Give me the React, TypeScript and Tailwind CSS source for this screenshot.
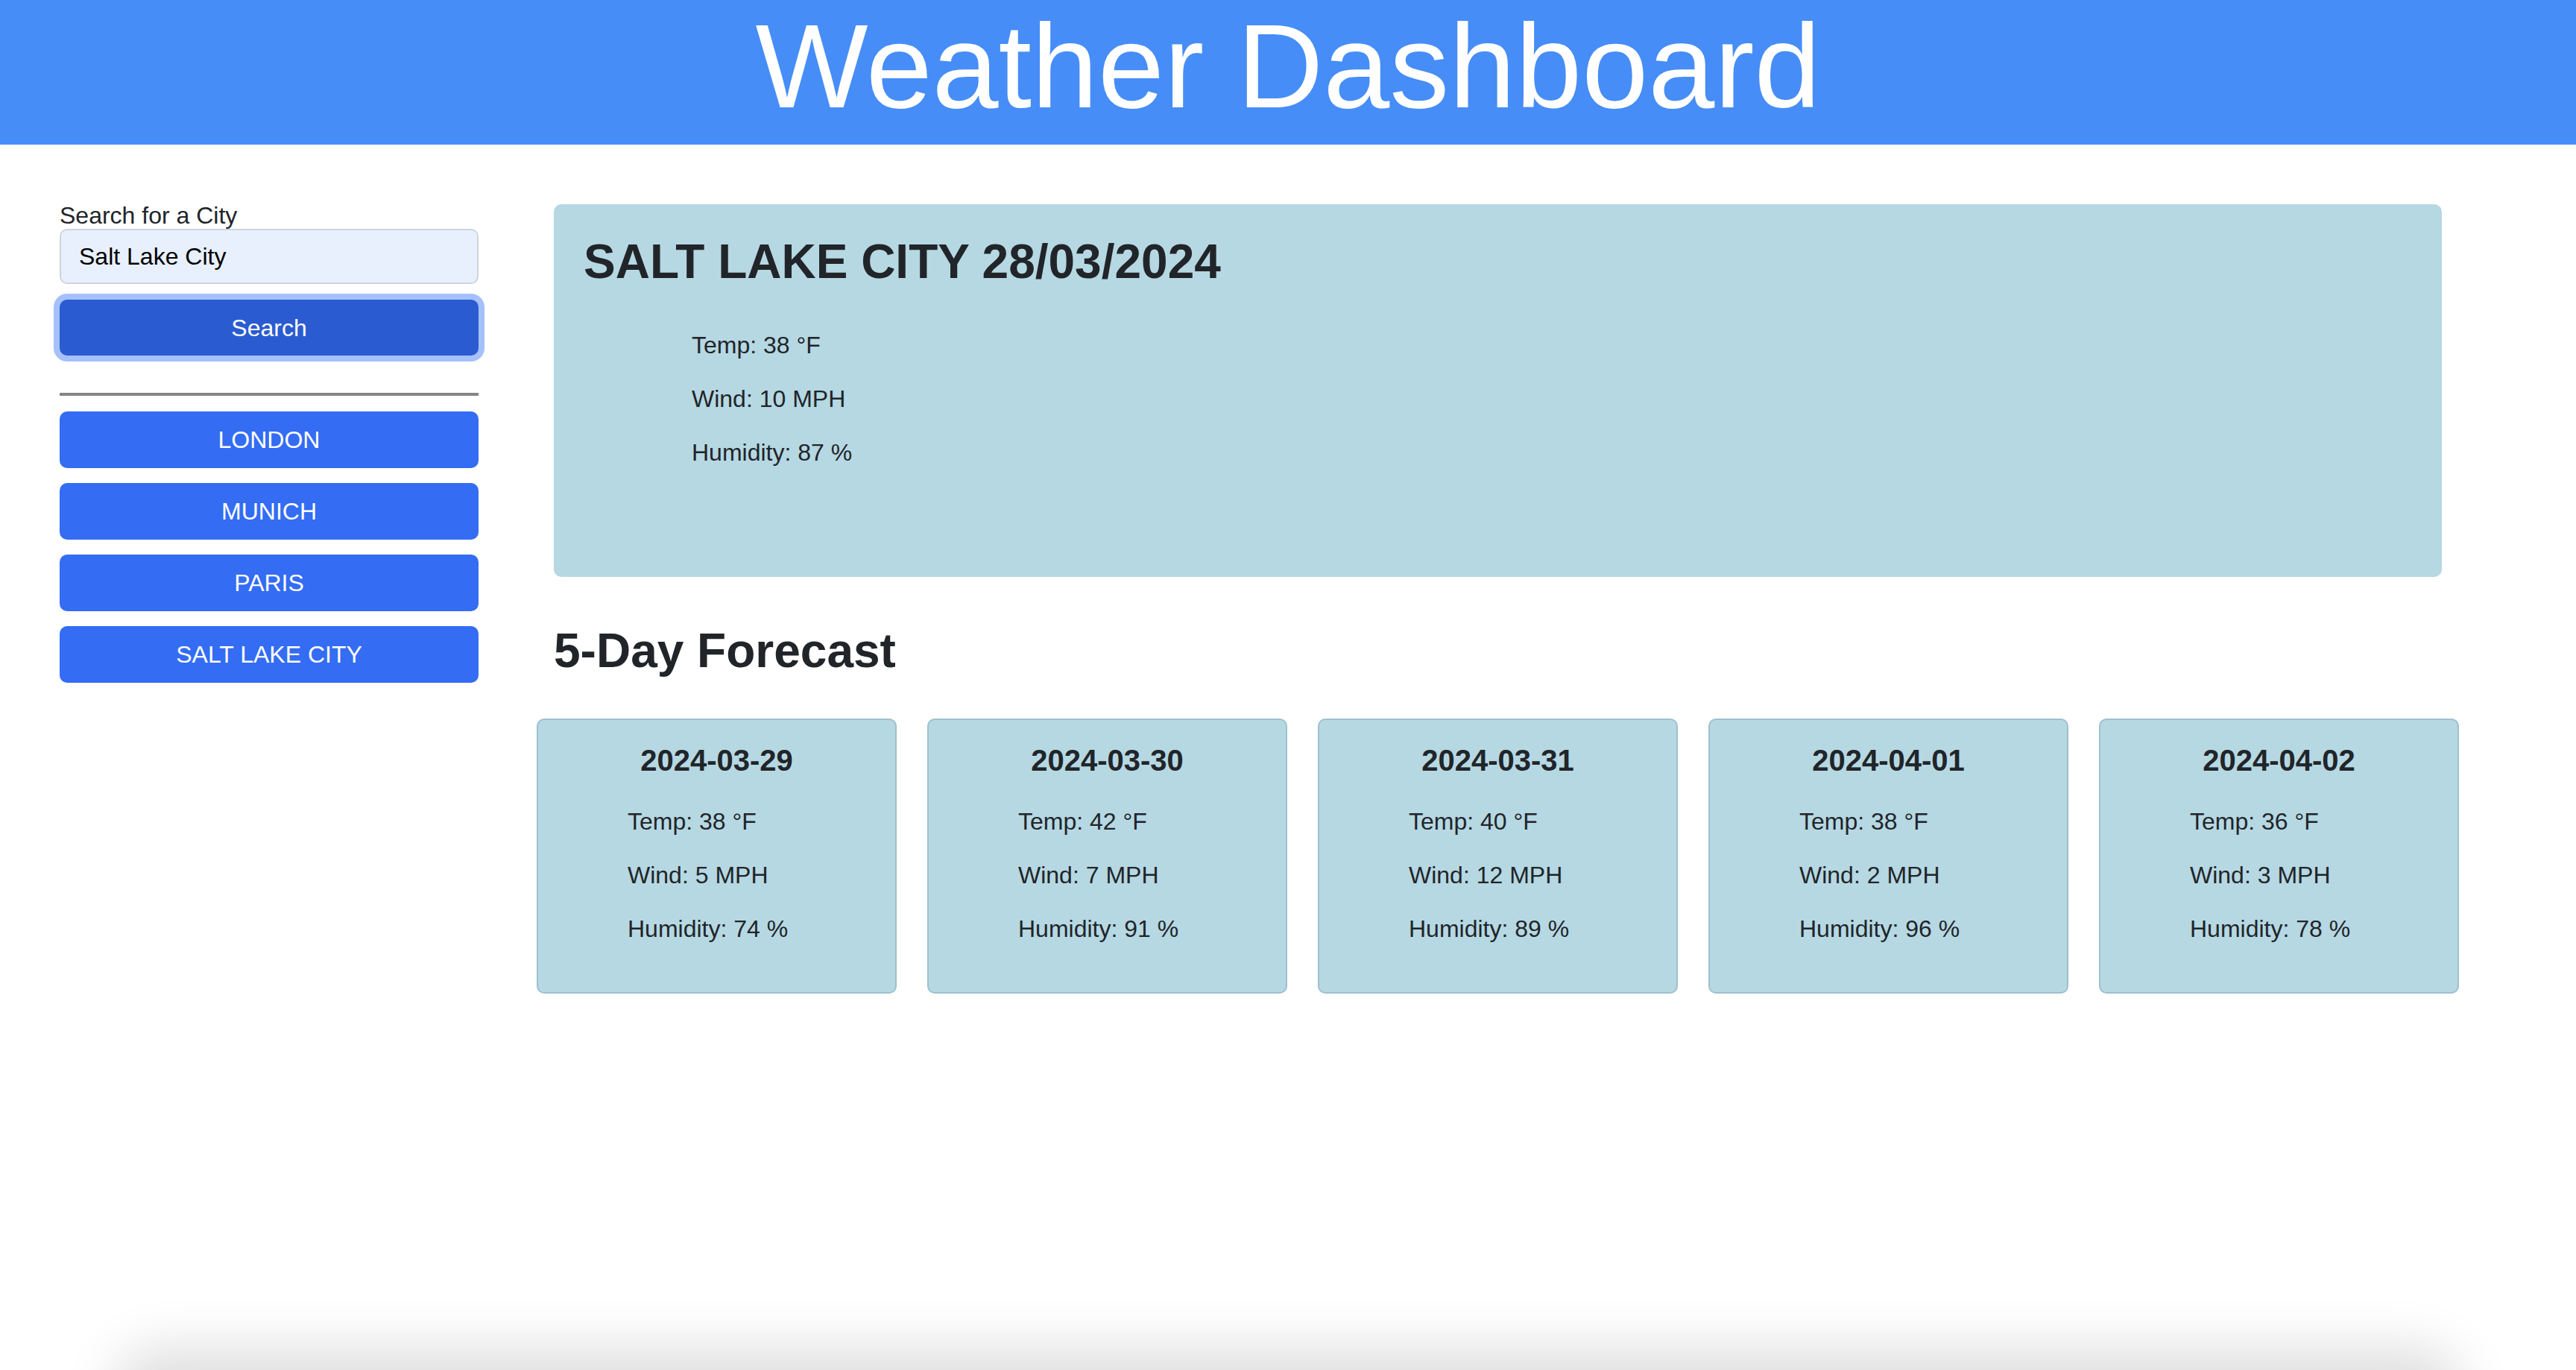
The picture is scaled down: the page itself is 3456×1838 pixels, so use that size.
import React, { useState } from 'react';

type Day = {
  date: string;
  temp: number;
  wind: number;
  humidity: number;
};

const forecast: Day[] = [
  { date: '2024-03-29', temp: 38, wind: 5, humidity: 74 },
  { date: '2024-03-30', temp: 42, wind: 7, humidity: 91 },
  { date: '2024-03-31', temp: 40, wind: 12, humidity: 89 },
  { date: '2024-04-01', temp: 38, wind: 2, humidity: 96 },
  { date: '2024-04-02', temp: 36, wind: 3, humidity: 78 },
];

const history = ['LONDON', 'MUNICH', 'PARIS', 'SALT LAKE CITY'];

const App: React.FC = () => {
  const [city, setCity] = useState('Salt Lake City');

  return (
    <div
      className="relative min-h-[1838px] overflow-hidden bg-white text-[#212529]"
      style={{ fontFamily: '"Liberation Sans", Arial, Helvetica, sans-serif' }}
    >
      {/* Header */}
      <header className="flex h-[194px] justify-center bg-[#468df7] pt-[9px]">
        <h1 className="text-[160px] font-normal leading-[160px] text-white">Weather Dashboard</h1>
      </header>

      <div className="flex pl-[80px]">
        {/* Sidebar */}
        <aside className="mt-[77px] flex w-[562px] flex-col">
          <label htmlFor="city" className="text-[32px] leading-[36px]">
            Search for a City
          </label>
          <input
            id="city"
            type="text"
            value={city}
            onChange={(e) => setCity(e.target.value)}
            className="h-[74px] w-full rounded-[10px] border-2 border-[#d0d4da] bg-[#e8f0fe] px-[24px] text-[32px] text-black focus:outline-none"
          />
          <button className="mt-[21px] h-[75px] w-full rounded-[10px] bg-[#2b5bd0] text-[32px] text-white shadow-[0_0_0_8px_#a5c0fb]">
            Search
          </button>
          <hr className="mt-[50px] h-[4px] border-0 bg-[#858585]" />
          <div className="mt-[21px] flex flex-col gap-[20px]">
            {history.map((name) => (
              <button
                key={name}
                className="h-[76px] w-full rounded-[10px] bg-[#346cf3] text-[32px] text-white"
              >
                {name}
              </button>
            ))}
          </div>
        </aside>

        {/* Main */}
        <main className="ml-[78px] mt-[80px] flex w-[2579px] flex-col">
          {/* Current weather */}
          <section className="mx-[23px] h-[500px] rounded-[10px] bg-[#b6d8e3] pl-[40px] pt-[39px]">
            <h2 className="text-[64px] font-bold leading-[77px]">SALT LAKE CITY 28/03/2024</h2>
            <div className="ml-[145px] mt-[53px] flex flex-col gap-[32px] text-[32px] leading-[40px]">
              <p>Temp: 38 °F</p>
              <p>Wind: 10 MPH</p>
              <p>Humidity: 87 %</p>
            </div>
          </section>

          <h2 className="ml-[23px] mt-[61px] text-[64px] font-bold leading-[77px]">5-Day Forecast</h2>

          {/* Forecast cards */}
          <div className="mt-[52px] grid grid-cols-5 gap-[41px]">
            {forecast.map((d) => (
              <div
                key={d.date}
                className="h-[369px] rounded-[10px] border-2 border-[#9fc0cc] bg-[#b6d8e3] pt-[30px]"
              >
                <h5 className="text-center text-[40px] font-bold leading-[48px]">{d.date}</h5>
                <div className="ml-[120px] mt-[38px] flex flex-col gap-[32px] text-[32px] leading-[40px]">
                  <p>Temp: {d.temp} °F</p>
                  <p>Wind: {d.wind} MPH</p>
                  <p>Humidity: {d.humidity} %</p>
                </div>
              </div>
            ))}
          </div>
        </main>
      </div>

      {/* window shadow along the bottom edge */}
      <div className="pointer-events-none absolute bottom-[-70px] left-[180px] right-[180px] h-[70px] rounded-[40px] shadow-[0_0_70px_30px_rgba(0,0,0,0.13)]" />
    </div>
  );
};

export default App;
